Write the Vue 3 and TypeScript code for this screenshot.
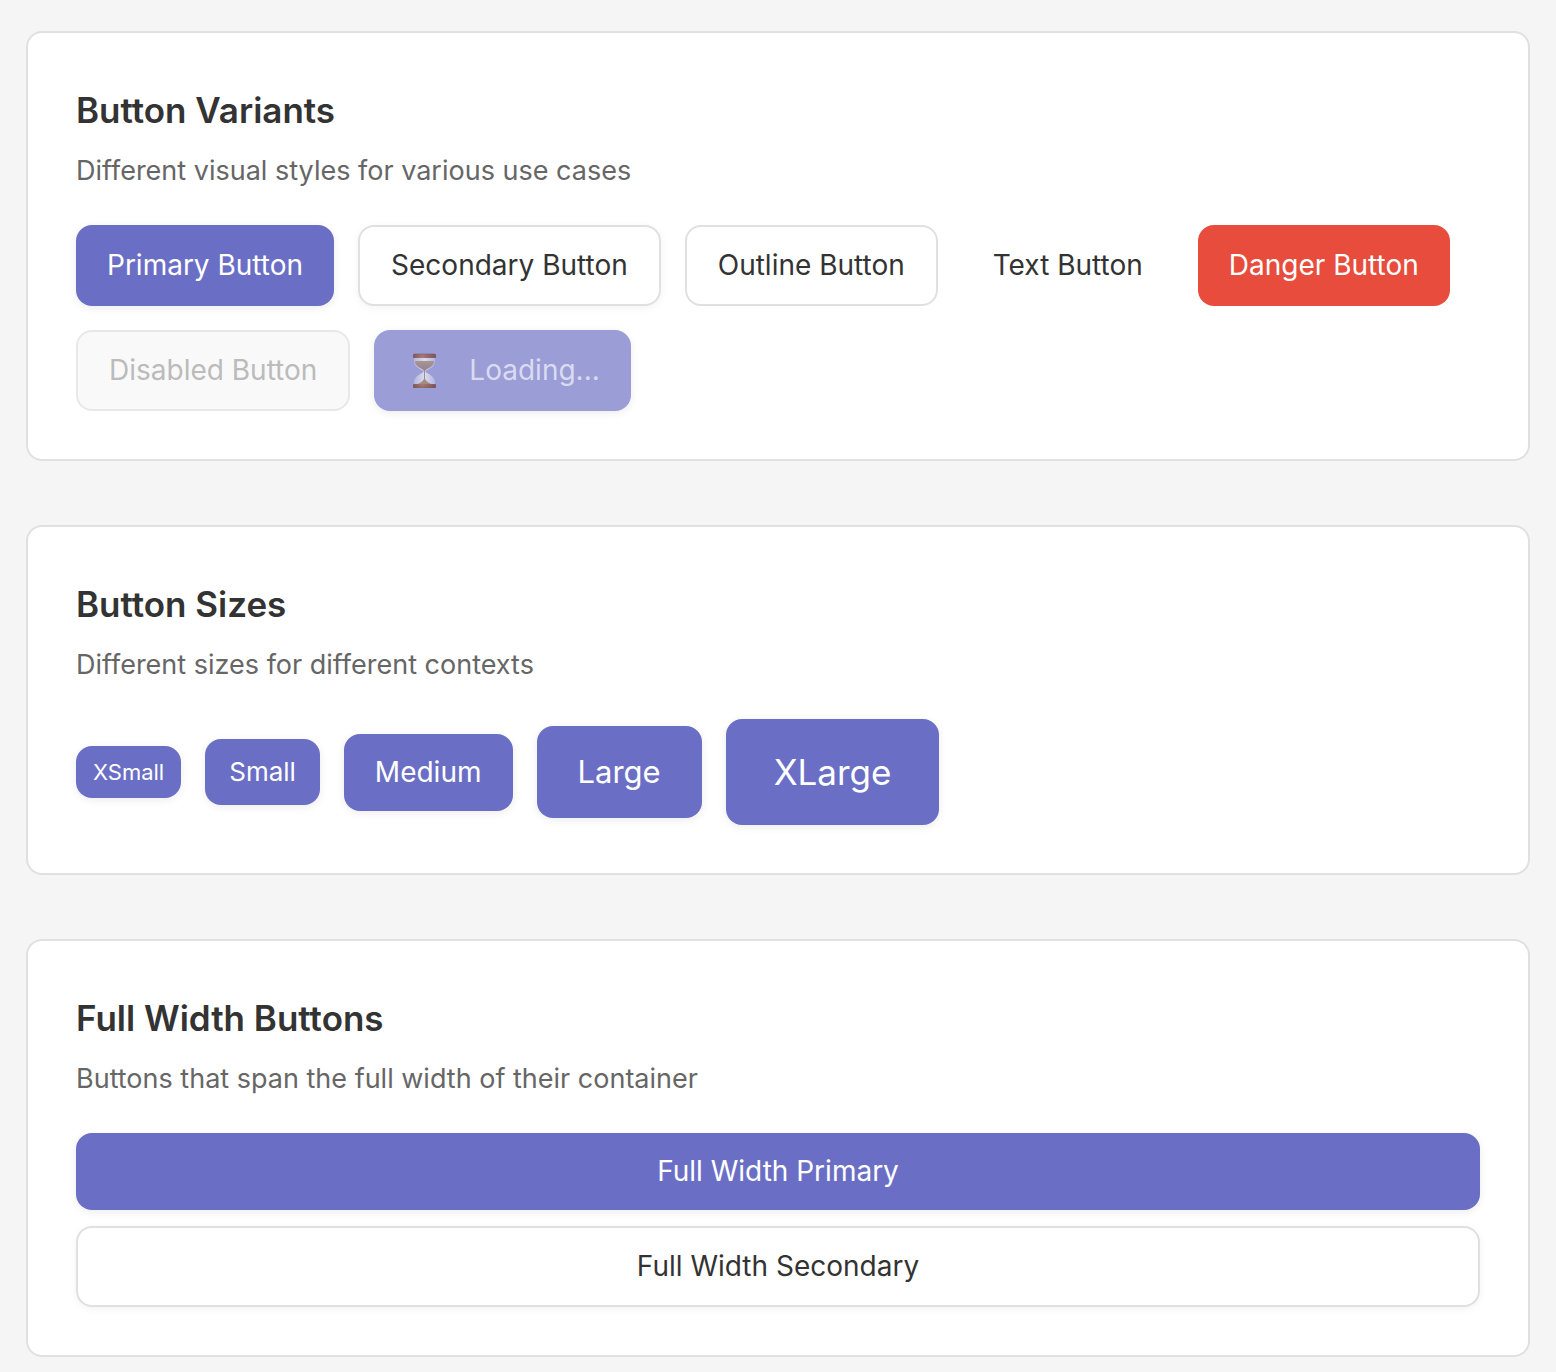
<script setup lang="ts">
interface Item { label: string; kind: string }
const variants: Item[] = [
  { label: 'Primary Button', kind: 'primary' },
  { label: 'Secondary Button', kind: 'secondary' },
  { label: 'Outline Button', kind: 'outline' },
  { label: 'Text Button', kind: 'text' },
  { label: 'Danger Button', kind: 'danger' },
]
const sizes: Item[] = [
  { label: 'XSmall', kind: 'xs' },
  { label: 'Small', kind: 'sm' },
  { label: 'Medium', kind: 'md' },
  { label: 'Large', kind: 'lg' },
  { label: 'XLarge', kind: 'xl' },
]
</script>

<template>
  <main class="page">
    <section class="card">
      <h2>Button Variants</h2>
      <p>Different visual styles for various use cases</p>
      <div class="row">
        <button v-for="v in variants" :key="v.kind" type="button" class="btn tall" :class="v.kind">{{ v.label }}</button>
        <button type="button" class="btn tall disabled" disabled>Disabled Button</button>
        <button type="button" class="btn tall primary loading" disabled>
          <svg class="hourglass" viewBox="0 0 36 36" aria-hidden="true">
            <defs>
              <linearGradient id="wood" x1="0" x2="1">
                <stop offset="0" stop-color="#80565a" />
                <stop offset="0.4" stop-color="#a87a70" />
                <stop offset="1" stop-color="#7b545c" />
              </linearGradient>
              <linearGradient id="glass" x1="0" x2="1">
                <stop offset="0" stop-color="#b4b5de" />
                <stop offset="0.5" stop-color="#dcdcf0" />
                <stop offset="1" stop-color="#b4b5de" />
              </linearGradient>
              <linearGradient id="sand" x1="0" x2="0" y1="0" y2="1">
                <stop offset="0" stop-color="#a8968f" />
                <stop offset="1" stop-color="#8f7f92" />
              </linearGradient>
            </defs>
            <path d="M9 4h21v4c0 5-4 7-8 9-2 1-2 2 0 3 4 2 8 5 8 9v3H9v-3c0-4 4-7 8-9 2-1 2-2 0-3-4-2-8-4-8-9z" fill="url(#glass)" />
            <path d="M10 8h19c0 4-3 6-7 8-1 1-2 1-2 3h-1c0-2-1-2-2-3-4-2-7-4-7-8z" fill="url(#sand)" />
            <path d="M19 17h1v9c1 2 4 4 6 5H13c2-1 5-3 6-5z" fill="#a58b85" />
            <rect x="8" y="1" width="23" height="4" rx="1" fill="url(#wood)" />
            <rect x="8" y="31" width="23" height="4" rx="1" fill="url(#wood)" />
            <path d="M9 1h21M9 34h21" stroke="#6b5268" stroke-width="1" opacity="0.5" />
          </svg>
          Loading...
        </button>
      </div>
    </section>
    <section class="card">
      <h2>Button Sizes</h2>
      <p>Different sizes for different contexts</p>
      <div class="row">
        <button v-for="s in sizes" :key="s.kind" type="button" class="btn primary" :class="s.kind">{{ s.label }}</button>
      </div>
    </section>
    <section class="card">
      <h2>Full Width Buttons</h2>
      <p>Buttons that span the full width of their container</p>
      <div class="stack">
        <button type="button" class="btn primary">Full Width Primary</button>
        <button type="button" class="btn secondary tall">Full Width Secondary</button>
      </div>
    </section>
  </main>
</template>

<style>
body { margin: 0; background: #f5f5f5; }
</style>
<style scoped>
.page { display: flex; flex-direction: column; gap: 64px; padding: 31px 26px 15px; font-family: Inter, "Liberation Sans", sans-serif; }
.card { background: #fff; border: 2px solid #e0e0e0; border-radius: 16px; padding: 48px; }
h2 { margin: 0 0 12px; font-size: 35px; line-height: 58px; font-weight: 600; color: #333; }
p { margin: 0 0 34px; font-size: 27px; line-height: 40px; color: #666; }
.row { display: flex; flex-wrap: wrap; align-items: center; gap: 24px; }
.stack { display: flex; flex-direction: column; gap: 16px; }
.btn { display: inline-flex; align-items: center; justify-content: center; box-sizing: border-box; margin: 0; padding: 20px 31px; border: 0; border-radius: 16px; font-family: inherit; font-size: 28px; font-weight: 400; line-height: 37px; color: #333; background: transparent; }
.primary { background: #6a6fc5; color: #fff; box-shadow: 0 2px 8px rgba(0, 0, 0, 0.08); }
.secondary { background: #fff; border: 2px solid #e0e0e0; box-shadow: 0 2px 8px rgba(0, 0, 0, 0.05); }
.outline { border: 2px solid #e0e0e0; }
.danger { background: #e74c3c; color: #fff; }
.disabled { border: 2px solid #e8e8e8; background: #f9f9f9; color: #bbb; }
.loading { background: #9b9dd6; color: #dadbf0; gap: 28px; }
.hourglass { width: 36px; height: 36px; }
.tall { min-height: 81px; }
.xs { padding: 12px 17px; font-size: 22px; line-height: 28px; }
.sm { padding: 16px 24px; font-size: 26px; line-height: 34px; }
.lg { padding: 24px 41px; font-size: 31px; line-height: 44px; }
.xl { padding: 28px 48px; font-size: 35px; line-height: 50px; }
</style>
